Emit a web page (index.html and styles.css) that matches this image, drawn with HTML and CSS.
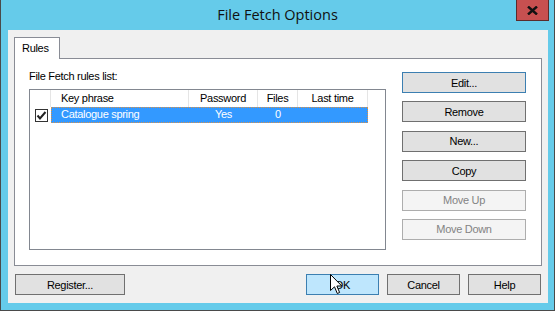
FILE: index.html
```html
<!DOCTYPE html>
<html lang="en">
<head>
  <meta charset="UTF-8">
  <title>File Fetch Options</title>
  <link rel="stylesheet" href="styles.css">
</head>
<body>

<div class="window">
  <div class="titlebar">
    <span></span>
    <div class="title">File Fetch Options</div>
    <div class="close">
      <svg width="11" height="9" viewBox="0 0 11 9"><path d="M1 0.5 L10 8.5 M10 0.5 L1 8.5" stroke="#111" stroke-width="2.4"/></svg>
    </div>
  </div>

  <div class="client">
    <div class="tabs">
      <div class="tab active">Rules</div>
    </div>
    <div class="tab-page">
      <div class="rules-col">
        <div class="label">File Fetch rules list:</div>
        <div class="listview">
          <div class="lv-row lv-header">
            <div class="c-check"></div>
            <div class="c-key">Key phrase</div>
            <div class="c-pass">Password</div>
            <div class="c-files">Files</div>
            <div class="c-time">Last time</div>
            <div class="c-rest"></div>
          </div>
          <div class="lv-row lv-item">
            <div class="c-check"><span class="checkbox"><svg width="11" height="11" viewBox="0 0 11 11"><path d="M1.5 5.5 L4 8.5 L9.5 2" stroke="#222" stroke-width="2" fill="none"/></svg></span></div>
            <div class="sel">
              <div class="c-key">Catalogue spring</div>
              <div class="c-pass">Yes</div>
              <div class="c-files">0</div>
              <div class="c-time"></div>
            </div>
          </div>
        </div>
      </div>
      <div class="side-buttons">
        <button class="btn focused">Edit...</button>
        <button class="btn">Remove</button>
        <button class="btn">New...</button>
        <button class="btn">Copy</button>
        <button class="btn" disabled>Move Up</button>
        <button class="btn" disabled>Move Down</button>
      </div>
    </div>

    <div class="bottom-bar">
      <button class="btn register">Register...</button>
      <div class="dialog-buttons">
        <button class="btn small hover">OK
          <svg class="cursor" width="13" height="21" viewBox="0 0 13 21"><path d="M0.5 0.5 L0.5 16.5 L4.5 12.8 L7.3 19.5 L9.6 18.5 L6.9 12 L11.8 12 Z" fill="#fff" stroke="#000" stroke-width="1"/></svg>
        </button>
        <button class="btn small">Cancel</button>
        <button class="btn small">Help</button>
      </div>
    </div>
  </div>
</div>

</body>
</html>
```

FILE: styles.css
```css
body {
  margin: 0;
  padding: 0;
  font-family: 'Liberation Sans', Arial, sans-serif;
  font-size: 11px;
  letter-spacing: -0.3px;
  color: #000;
}
.window {
  width: 555px;
  height: 311px;
  box-sizing: border-box;
  background: #65cbea;
  border: 1px solid #4a4a4a;
  border-top: none;
  padding: 0 6px 7px 7px;
  display: flex;
  flex-direction: column;
}
.titlebar {
  height: 30px;
  display: grid;
  grid-template-columns: 1fr auto 1fr;
  margin: 0 -6px 0 -7px;
}
.title {
  font-family: 'Open Sans', sans-serif;
  font-size: 14.5px;
  letter-spacing: 0;
  line-height: 30px;
  color: #111;
}
.close {
  justify-self: end;
  margin-right: 5px;
  width: 33px;
  height: 21px;
  box-sizing: border-box;
  background: #c75050;
  border: 1px solid #5b2b2b;
  border-top: none;
  display: flex;
  align-items: center;
  justify-content: center;
}
.client {
  flex: 1;
  background: #f0f0f0;
  padding: 7px 6px 0 6px;
  display: flex;
  flex-direction: column;
}
.tabs {
  display: flex;
  height: 21px;
}
.tab {
  width: 46px;
  box-sizing: border-box;
  border: 1px solid #898c95;
  border-bottom: none;
  background: #fff;
  padding: 4px 0 0 7px;
  position: relative;
  z-index: 1;
  height: 22px;
}
.tab-page {
  height: 208px;
  box-sizing: border-box;
  border: 1px solid #898c95;
  background: #fff;
  display: flex;
  gap: 16px;
  padding: 11px 14px 0 14px;
}
.rules-col {
  width: 357px;
}
.label {
  line-height: 13px;
  height: 13px;
  margin-bottom: 6px;
}
.listview {
  height: 161px;
  box-sizing: border-box;
  border: 1px solid #828790;
  background: #fff;
}
.lv-row {
  display: flex;
  height: 17px;
  line-height: 16px;
}
.lv-row > div, .sel > div {
  box-sizing: border-box;
}
.c-check { width: 21px; }
.c-key { width: 138px; padding-left: 10px; }
.c-pass { width: 69px; text-align: center; }
.c-files { width: 40px; text-align: center; }
.c-time { width: 70px; text-align: center; }
.c-rest { flex: 1; }
.lv-header > div {
  border-right: 1px solid #e5e5e5;
}
.lv-header > .c-rest { border-right: none; }
.lv-item { height: 16px; line-height: 15px; }
.lv-item .c-check {
  display: flex;
  align-items: center;
  padding-left: 5px;
}
.checkbox {
  width: 13px;
  height: 13px;
  box-sizing: border-box;
  border: 1px solid #333;
  background: #fff;
  display: flex;
  align-items: center;
  justify-content: center;
}
.sel {
  display: flex;
  background: #3399ff;
  color: #fff;
  outline: 1px dotted #d8914a;
  outline-offset: -1px;
}
.side-buttons {
  width: 124px;
  display: flex;
  flex-direction: column;
  gap: 8.4px;
  padding-top: 2px;
}
.btn {
  font-family: 'Liberation Sans', Arial, sans-serif;
  font-size: 11px;
  letter-spacing: -0.3px;
  color: #000;
  height: 21px;
  box-sizing: border-box;
  background: #e1e1e1;
  border: 1px solid #707070;
  padding: 0;
  margin: 0;
  position: relative;
}
.btn.focused { border-color: #3c7fb1; }
.btn:disabled {
  background: #f4f4f4;
  border-color: #adadad;
  color: #838383;
}
.bottom-bar {
  display: flex;
  justify-content: space-between;
  padding: 8px 1px 0 1px;
}
.register { width: 110px; }
.dialog-buttons {
  display: flex;
  gap: 8px;
}
.btn.small { width: 73px; }
.btn.hover {
  background: #bee6fd;
  border-color: #3c7fb1;
}
.cursor {
  position: absolute;
  left: 23px;
  top: -1px;
}
```
